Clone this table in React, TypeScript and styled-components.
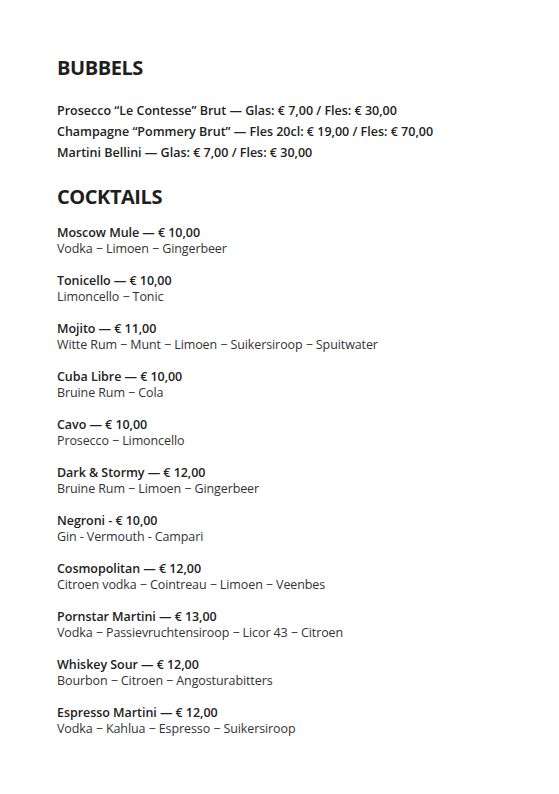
import React from "react";
import styled, { createGlobalStyle } from "styled-components";

const GlobalStyle = createGlobalStyle`
  body {
    margin: 0;
    background: #fff;
    font-family: "Open Sans", "Liberation Sans", sans-serif;
    color: #222;
  }
`;

const Page = styled.div`
  width: 559px;
  min-height: 794px;
  box-sizing: border-box;
  padding: 56px 0 0 57px;
`;

const Section = styled.section<{ $gap: number }>`
  display: flex;
  flex-direction: column;
  gap: ${(p) => p.$gap}px;
  margin-bottom: 22px;
`;

const Heading = styled.h2<{ $after?: number }>`
  margin: 0 0 ${(p) => p.$after ?? 16}px;
  font-size: 20px;
  line-height: 24px;
  font-weight: 700;
  letter-spacing: -0.45px;
  color: #1f1f1f;
`;

const PriceLine = styled.div`
  font-size: 12.5px;
  line-height: 21px;
  font-weight: 600;
  color: #222;
`;

const Drink = styled.div`
  display: flex;
  flex-direction: column;
`;

const Name = styled.div`
  font-size: 12.5px;
  line-height: 16px;
  font-weight: 600;
  letter-spacing: -0.05px;
  color: #222;
`;

const Ingredients = styled.div`
  font-size: 12.5px;
  line-height: 16px;
  font-weight: 400;
  letter-spacing: -0.1px;
  color: #333;
`;

const bubbels = [
  "Prosecco \u201cLe Contesse\u201d Brut \u2014 Glas: \u20ac 7,00 / Fles: \u20ac 30,00",
  "Champagne \u201cPommery Brut\u201d \u2014 Fles 20cl: \u20ac 19,00 / Fles: \u20ac 70,00",
  "Martini Bellini \u2014 Glas: \u20ac 7,00 / Fles: \u20ac 30,00",
];

const cocktails = [
  ["Moscow Mule \u2014 \u20ac 10,00", "Vodka \u2212 Limoen \u2212 Gingerbeer"],
  ["Tonicello \u2014 \u20ac 10,00", "Limoncello \u2212 Tonic"],
  ["Mojito \u2014 \u20ac 11,00", "Witte Rum \u2212 Munt \u2212 Limoen \u2212 Suikersiroop \u2212 Spuitwater"],
  ["Cuba Libre \u2014 \u20ac 10,00", "Bruine Rum \u2212 Cola"],
  ["Cavo \u2014 \u20ac 10,00", "Prosecco \u2212 Limoncello"],
  ["Dark & Stormy \u2014 \u20ac 12,00", "Bruine Rum \u2212 Limoen \u2212 Gingerbeer"],
  ["Negroni - \u20ac 10,00", "Gin - Vermouth - Campari"],
  ["Cosmopolitan \u2014 \u20ac 12,00", "Citroen vodka \u2212 Cointreau \u2212 Limoen \u2212 Veenbes"],
  ["Pornstar Martini \u2014 \u20ac 13,00", "Vodka \u2212 Passievruchtensiroop \u2212 Licor 43 \u2212 Citroen"],
  ["Whiskey Sour \u2014 \u20ac 12,00", "Bourbon \u2212 Citroen \u2212 Angosturabitters"],
  ["Espresso Martini \u2014 \u20ac 12,00", "Vodka \u2212 Kahlua \u2212 Espresso \u2212 Suikersiroop"],
];

export default function App() {
  return (
    <>
      <GlobalStyle />
      <Page>
        <Heading $after={20}>BUBBELS</Heading>
        <Section $gap={0}>
          {bubbels.map((b) => (
            <PriceLine key={b}>{b}</PriceLine>
          ))}
        </Section>
        <Heading $after={16}>COCKTAILS</Heading>
        <Section $gap={16}>
          {cocktails.map(([name, ing]) => (
            <Drink key={name}>
              <Name>{name}</Name>
              <Ingredients>{ing}</Ingredients>
            </Drink>
          ))}
        </Section>
      </Page>
    </>
  );
}
